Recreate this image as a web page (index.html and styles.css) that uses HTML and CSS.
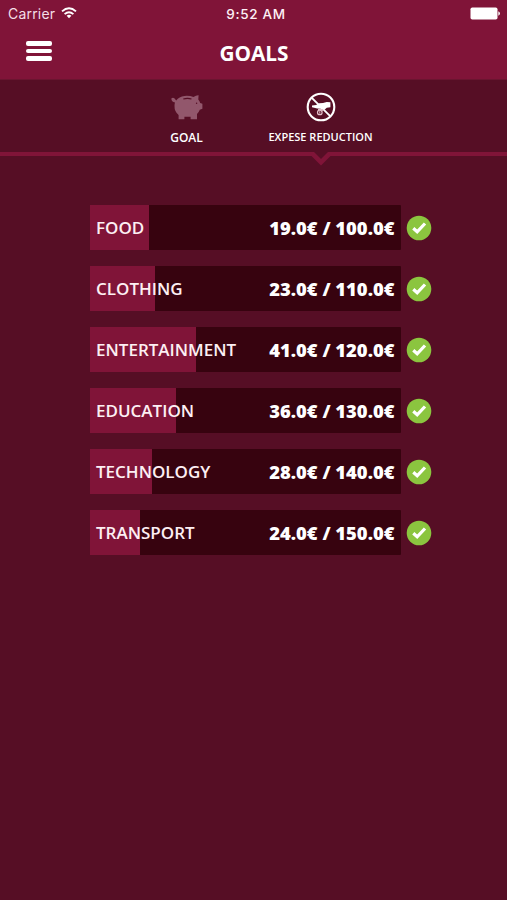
FILE: index.html
```
<!DOCTYPE html>
<html lang="en">
<head>
<meta charset="utf-8">
<title>Goals</title>
<link rel="stylesheet" href="styles.css">
</head>
<body>
<header class="header">
  <div class="status">
    <div class="carrier"><span>Carrier</span>
      <svg class="wifi" width="16" height="12" viewBox="0 0 16 12" fill="none" stroke="#fff" stroke-width="1.9"><path d="M1 4.4Q8-1.8 15 4.4M3.6 7.1Q8 3.2 12.4 7.1"/><path d="M5.6 8.8Q8 6.8 10.4 8.8L8 11.3Z" fill="#fff" stroke="none"/></svg>
    </div>
    <span class="clock">9:52 AM</span>
    <svg class="battery" width="30" height="13" viewBox="0 0 30 13" fill="#fff"><rect x=".5" y=".5" width="27" height="12" rx="1.8"/><path d="M28.3 4.3Q30 5 30 6.5T28.3 8.7Z"/></svg>
  </div>
  <div class="titlebar">
    <div class="menu"><i></i><i></i><i></i></div>
    <h1>GOALS</h1>
  </div>
</header>
<nav class="tabs">
  <div class="tab goal">
    <svg width="32" height="26" viewBox="0 0 32 26"><path fill="#92576c" d="M.3 4.6Q1.8 2.8 3.6 4.4L5.2 6.6Q8 2.4 13.5 1.9Q18.5 1.4 22.5 3.1Q25.2 1 27.6 1.2L27.3 5.4Q28.8 7 29.2 9L31.4 9.8V14.8L28.8 15.8Q27.8 18.4 26 20V25.2H19.6V22.8H13.4V25.2H7.6V21Q3.3 17.6 3.5 11.8Q3.5 10 4 8.6Q.4 8.2 .3 4.6Z"/><path d="M12.3 5.1Q16.5 3.7 20.5 5.1" fill="none" stroke="#560e25" stroke-width="1.1"/><circle cx="25.6" cy="9.2" r=".7" fill="#560e25"/></svg>
    <span>GOAL</span>
  </div>
  <div class="tab reduction">
    <svg width="30" height="30" viewBox="0 0 30 30"><circle cx="15" cy="15" r="13.3" fill="none" stroke="#fff" stroke-width="2.1"/><path d="M5.8 5.8L24.2 24.2" stroke="#fff" stroke-width="1.9"/><path d="M6 13.4L10 13.1L13.2 11.2L17 10.9L20.8 10L24.4 10.3V15.2L20.8 15.8L18.8 17.5L14.3 16.8L11.2 16.5L6 15.2Z" fill="#fff"/><circle cx="13.8" cy="20.4" r="2.3" fill="none" stroke="#e3bfca" stroke-width="1.2"/><path d="M12 17.5H17L15.8 19.4M13.8 19.2V21.6" fill="none" stroke="#e3bfca"/></svg>
    <span>EXPESE REDUCTION</span>
  </div>
  <svg class="pointer" width="24" height="14" viewBox="0 0 24 14"><path d="M1 0H23V4H21.5L12 13.5L2.5 4H1Z" fill="#801438"/><path d="M5 0H19L12 7Z" fill="#560e25"/></svg>
</nav>
<main class="list">
  <div class="row"><div class="bar"><div class="fill" style="width:19%"></div><span class="name">FOOD</span><b>19.0€ / 100.0€</b></div><svg class="check" viewBox="0 0 26 26"><circle cx="13" cy="13" r="12.3"/><path d="M7.3 13.2L11.2 16.8L19 8.5"/></svg></div>
  <div class="row"><div class="bar"><div class="fill" style="width:20.9%"></div><span class="name">CLOTHING</span><b>23.0€ / 110.0€</b></div><svg class="check" viewBox="0 0 26 26"><circle cx="13" cy="13" r="12.3"/><path d="M7.3 13.2L11.2 16.8L19 8.5"/></svg></div>
  <div class="row"><div class="bar"><div class="fill" style="width:34.2%"></div><span class="name">ENTERTAINMENT</span><b>41.0€ / 120.0€</b></div><svg class="check" viewBox="0 0 26 26"><circle cx="13" cy="13" r="12.3"/><path d="M7.3 13.2L11.2 16.8L19 8.5"/></svg></div>
  <div class="row"><div class="bar"><div class="fill" style="width:27.7%"></div><span class="name">EDUCATION</span><b>36.0€ / 130.0€</b></div><svg class="check" viewBox="0 0 26 26"><circle cx="13" cy="13" r="12.3"/><path d="M7.3 13.2L11.2 16.8L19 8.5"/></svg></div>
  <div class="row"><div class="bar"><div class="fill" style="width:20%"></div><span class="name">TECHNOLOGY</span><b>28.0€ / 140.0€</b></div><svg class="check" viewBox="0 0 26 26"><circle cx="13" cy="13" r="12.3"/><path d="M7.3 13.2L11.2 16.8L19 8.5"/></svg></div>
  <div class="row"><div class="bar"><div class="fill" style="width:16%"></div><span class="name">TRANSPORT</span><b>24.0€ / 150.0€</b></div><svg class="check" viewBox="0 0 26 26"><circle cx="13" cy="13" r="12.3"/><path d="M7.3 13.2L11.2 16.8L19 8.5"/></svg></div>
</main>
</body>
</html>
```
FILE: styles.css
```
* { box-sizing: border-box; }
body {
  margin: 0;
  min-height: 900px;
  background: #560e25;
  color: #fff;
  font-family: "Open Sans", sans-serif;
}
svg { display: block; flex: none; }
.header { height: 79px; background: #801438; }
.status {
  height: 27px;
  display: grid;
  grid-template-columns: 1fr auto 1fr;
  grid-template-rows: 27px;
  align-items: center;
  padding: 0 7px 0 8px;
  font: 14px/27px Inter, sans-serif;
}
.carrier { display: flex; gap: 6px; color: #f4dfe7; letter-spacing: .2px; }
.wifi { margin-top: 7px; }
.clock { padding: 1px 0 0 4px; font-size: 13.5px; font-weight: 500; letter-spacing: .7px; color: #fdf0f5; }
.battery { justify-self: end; }
.titlebar {
  height: 52px;
  display: grid;
  grid-template-columns: 1fr auto 1fr;
}
.menu { padding: 14px 0 0 26px; display: flex; flex-direction: column; gap: 3px; }
.menu i { width: 26px; height: 4.5px; border-radius: 2px; background: #fff; }
h1 { margin: 0; padding-left: 1px; font-size: 20.8px; line-height: 52px; font-weight: 700; }
.tabs {
  position: relative;
  height: 77px;
  border-top: 1px solid #6b1530;
  border-bottom: 4px solid #801438;
  display: flex;
  justify-content: center;
}
.tab { display: flex; flex-direction: column; align-items: center; white-space: nowrap; }
.tab span { line-height: 16px; }
.goal { width: 134px; padding-top: 14px; }
.goal span { margin-top: 10px; font-size: 12px; font-weight: 600; }
.reduction { width: 134px; padding-top: 12px; }
.reduction span { margin-top: 7px; font-size: 11px; font-weight: 600; }
.pointer { position: absolute; left: 309px; top: 72px; }
.list { padding: 49px 0 0 90px; display: flex; flex-direction: column; gap: 16px; }
.row { display: flex; align-items: center; gap: 5.5px; height: 45px; }
.bar {
  width: 310.5px;
  height: 45px;
  display: grid;
  grid-template-columns: 1fr auto;
  align-items: center;
  background: #37030f;
  border-radius: 1px;
}
.fill { grid-area: 1 / 1 / 2 / 3; height: 45px; background: #801438; }
.name { grid-area: 1 / 1; padding-left: 6px; font-size: 17px; font-weight: 600; color: #fdeff3; }
.bar b { grid-area: 1 / 2; padding: 0 6px 1px 0; font-size: 18.4px; font-weight: 800; }
.check { width: 26px; height: 26px; }
.check circle { fill: #8bc53f; }
.check path { fill: none; stroke: #fff; stroke-width: 3.2; }
```
